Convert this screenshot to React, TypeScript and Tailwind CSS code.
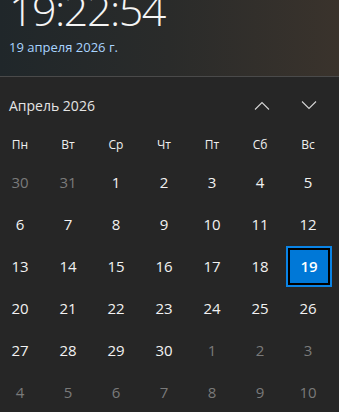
const weekDays = ["Пн", "Вт", "Ср", "Чт", "Пт", "Сб", "Вс"];

type Day = { n: number; cur: boolean; sel?: boolean };

const days: Day[] = [
  { n: 30, cur: false },
  { n: 31, cur: false },
  ...Array.from({ length: 30 }, (_, i) => ({ n: i + 1, cur: true, sel: i + 1 === 19 })),
  ...Array.from({ length: 10 }, (_, i) => ({ n: i + 1, cur: false })),
];

const Chevron = ({ up }: { up?: boolean }) => (
  <svg width="16" height="9" viewBox="0 0 16 9" fill="none">
    <path
      d={up ? "M1 8.5 L8 1.5 L15 8.5" : "M1 0.5 L8 7.5 L15 0.5"}
      stroke="#d4d4d4"
      strokeWidth="1.1"
    />
  </svg>
);

const App = () => {
  return (
    <div
      className="w-[339px] h-[412px] overflow-hidden bg-[#262626] text-white"
      style={{ fontFamily: '"Open Sans", "Noto Sans", sans-serif' }}
    >
      <div className="flex flex-col h-[77px] bg-gradient-to-r from-[#20272a] via-[#2a2b2a] to-[#3a332c] border-b border-[#4a4a4a] px-[9px]">
        <div className="text-[43px] font-light leading-[34px] tracking-[-1.5px] text-[#f5f5f5] -mt-[7px]">
          19:22:54
        </div>
        <div className="mt-[10px] text-[13px] leading-[20px] text-[#a9d4ff]">19 апреля 2026 г.</div>
      </div>

      <div className="flex items-center justify-between h-[56px] pl-[9px] pr-[22px]">
        <span className="text-[14px] text-[#e4e4e4]">Апрель 2026</span>
        <div className="flex items-center gap-[31px]">
          <Chevron up />
          <Chevron />
        </div>
      </div>

      <div className="-ml-[4px] grid grid-cols-[repeat(7,48px)]">
        {weekDays.map((d) => (
          <div key={d} className="h-[28px] pt-[3px] flex items-start justify-center text-[12px] text-[#f0f0f0]">
            {d}
          </div>
        ))}
        {days.map((d, i) => (
          <div key={i} className="h-[42px] flex items-center justify-center">
            {d.sel ? (
              <div className="w-[46px] h-[41px] ml-[2px] bg-[#0078d7] border-[2px] border-[#0a84e6] flex items-center justify-center">
                <div className="w-full h-full border-[2px] border-black flex items-center justify-center text-[15px] font-semibold text-white">
                  {d.n}
                </div>
              </div>
            ) : (
              <span className={`text-[15px] ${d.cur ? "text-[#f2f2f2]" : "text-[#7a7a7a]"}`}>{d.n}</span>
            )}
          </div>
        ))}
      </div>
    </div>
  );
};

export default App;
